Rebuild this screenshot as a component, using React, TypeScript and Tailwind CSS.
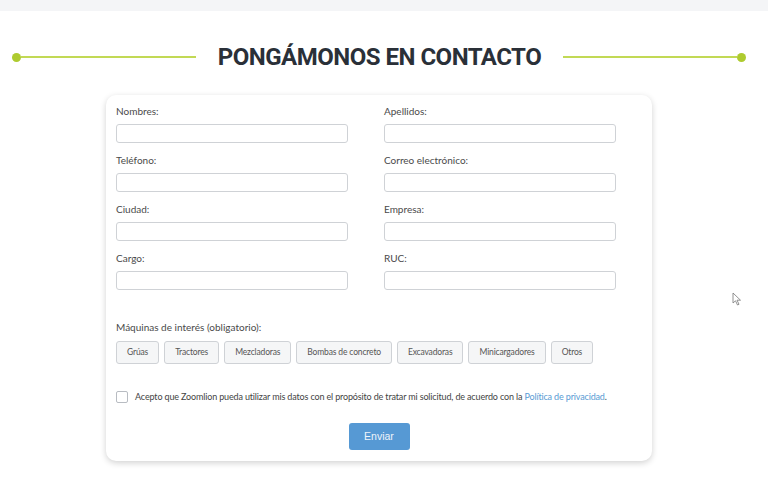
import React from "react";

const machines = ["Grúas", "Tractores", "Mezcladoras", "Bombas de concreto", "Excavadoras", "Minicargadores", "Otros"];

const Field: React.FC<{ label: string }> = ({ label }) => (
    <div className="flex flex-col">
        <label className="text-[10px] leading-[14px] h-[14px] mb-[6px] text-[#4a4a4a]">{label}</label>
        <div className="h-[19px] rounded-[3px] border border-[#cfd2d6] bg-white" />
    </div>
);

const App: React.FC = () => {
    return (
        <div className="relative w-[768px] h-[478px] bg-white overflow-hidden" style={{ fontFamily: 'Lato, "Liberation Sans", sans-serif' }}>
            <div className="h-[11px] bg-[#f4f5f7]" />
            <div className="flex items-center mt-[33px] pl-[12px] pr-[22px] h-[26px]">
                <div className="flex items-center w-[184px]">
                    <span className="w-[9px] h-[9px] rounded-full bg-[#aecb2f] shrink-0" />
                    <span className="flex-1 h-[2px] bg-[#c2d955]" />
                </div>
                <h1 className="flex-1 text-center text-[24px] leading-[26px] font-bold text-[#2a3038] whitespace-nowrap tracking-[-0.5px]" style={{ fontFamily: 'Roboto, sans-serif' }}>PONGÁMONOS EN CONTACTO</h1>
                <div className="flex items-center w-[183px]">
                    <span className="flex-1 h-[2px] bg-[#c2d955]" />
                    <span className="w-[9px] h-[9px] rounded-full bg-[#aecb2f] shrink-0" />
                </div>
            </div>

            <div className="ml-[106px] mt-[25px] w-[546px] rounded-[10px] bg-white shadow-[0_2px_6px_rgba(0,0,0,0.18)] px-[10px] pt-[9px] pb-[11px]">
                <div className="grid grid-cols-[232px_232px] gap-x-[36px] gap-y-[10px]">
                    <Field label="Nombres:" />
                    <Field label="Apellidos:" />
                    <Field label="Teléfono:" />
                    <Field label="Correo electrónico:" />
                    <Field label="Ciudad:" />
                    <Field label="Empresa:" />
                    <Field label="Cargo:" />
                    <Field label="RUC:" />
                </div>

                <div className="mt-[30px] text-[10px] leading-[14px] text-[#4a4a4a]">Máquinas de interés (obligatorio):</div>
                <div className="flex gap-[5px] mt-[7px]">
                    {machines.map((m) => (
                        <button key={m} className="h-[23px] px-[10px] rounded-[3px] border border-[#cfd2d6] bg-[#f5f6f7] text-[8.5px] tracking-[-0.15px] text-[#555] whitespace-nowrap">{m}</button>
                    ))}
                </div>

                <div className="flex items-center mt-[26px] gap-[7px] h-[14px]">
                    <span className="w-[12px] h-[12px] rounded-[2px] border border-[#b8bcc2] bg-white shrink-0" />
                    <p className="text-[9px] leading-[14px] tracking-[-0.15px] text-[#444] whitespace-nowrap">
                        Acepto que Zoomlion pueda utilizar mis datos con el propósito de tratar mi solicitud, de acuerdo con la <a className="text-[#5a9bd4]">Política de privacidad</a>.
                    </p>
                </div>

                <div className="flex justify-center mt-[19px]">
                    <button className="w-[61px] h-[27px] rounded-[3px] bg-[#5699d4] text-[#eef4fa] text-[10.5px]" style={{ fontFamily: '"Liberation Sans", Arial, sans-serif' }}>Enviar</button>
                </div>
            </div>

            <svg className="absolute left-[732px] top-[292px]" width="10" height="14" viewBox="0 0 10 14">
                <path d="M1 1 L1 11 L3.5 8.8 L5.5 13 L7 12.3 L5 8.2 L8.5 8.2 Z" fill="white" stroke="#777" strokeWidth="0.8" strokeLinejoin="round" />
            </svg>
        </div>
    );
};

export default App;
